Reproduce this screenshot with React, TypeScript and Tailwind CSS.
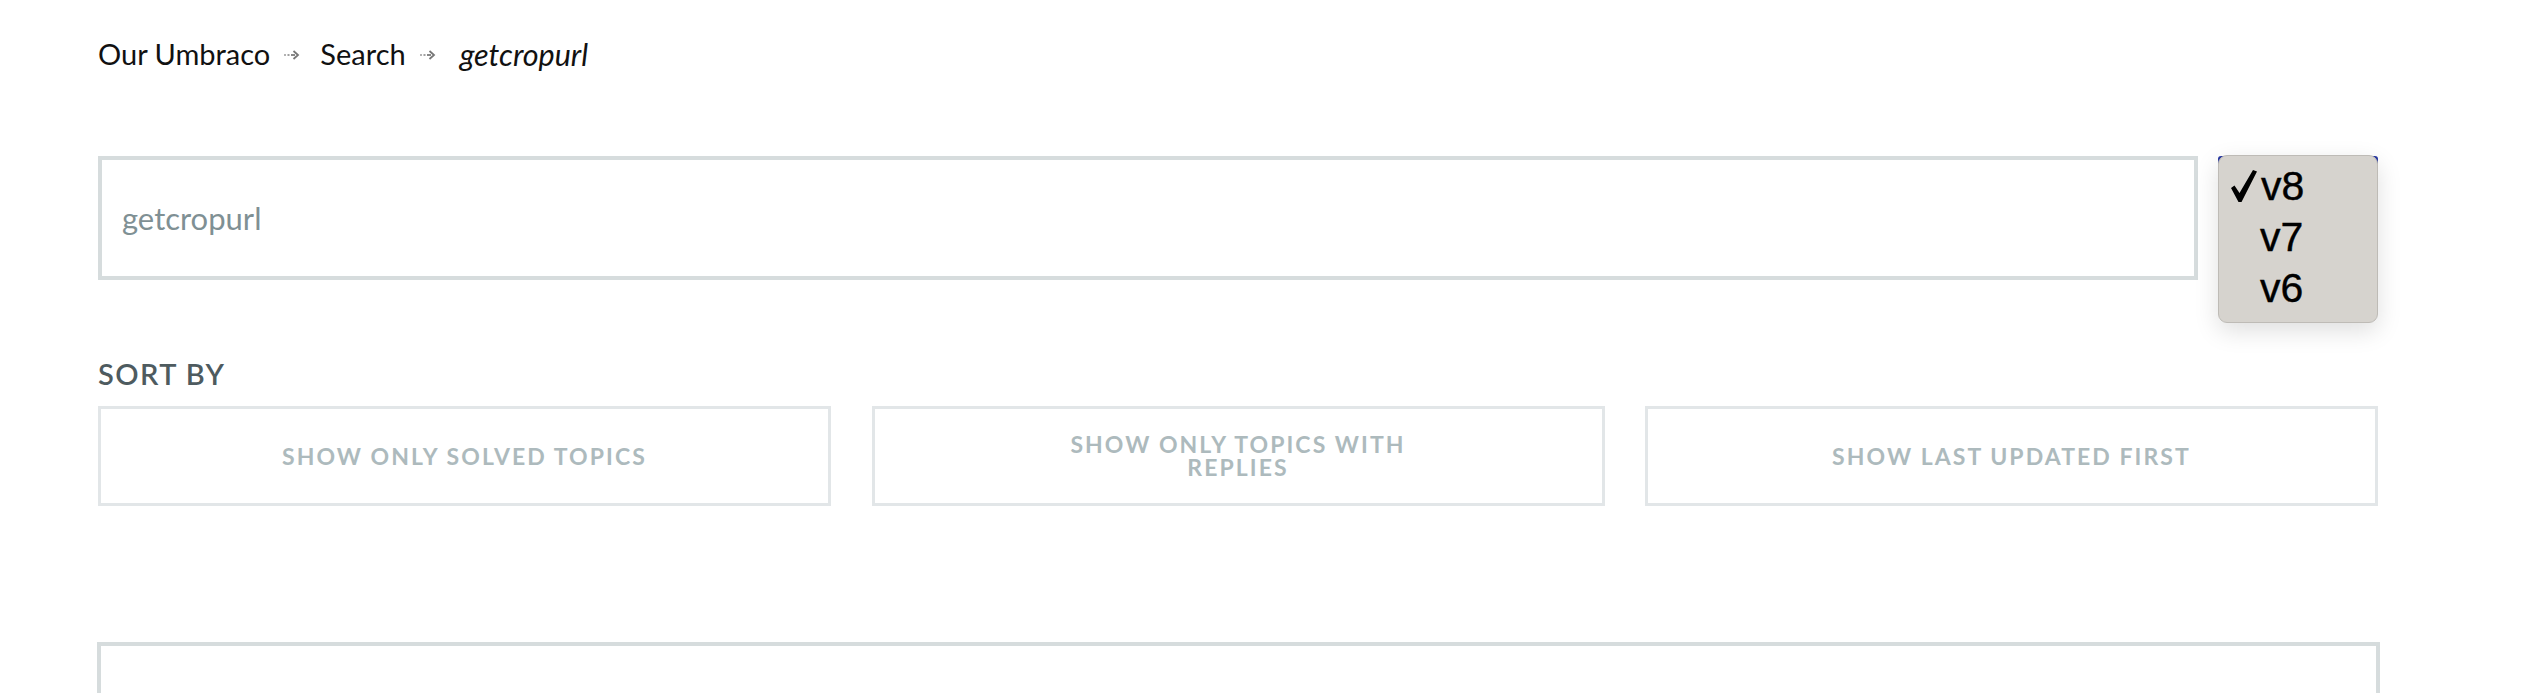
import React from "react";

function Arrow() {
  return (
    <svg width="16" height="10" viewBox="0 0 16 10" className="mx-[14px] mt-[2px] shrink-0">
      <rect x="0" y="4" width="2" height="2" fill="#b3b3b3" />
      <rect x="3.5" y="4" width="2" height="2" fill="#a0a0a0" />
      <rect x="7" y="4" width="4" height="2" fill="#888" />
      <path d="M9.5 1 L14 5 L9.5 9" fill="none" stroke="#777" strokeWidth="1.8" />
    </svg>
  );
}

function Check() {
  return (
    <svg width="26" height="32" viewBox="0 0 26 32" className="absolute left-[12px] top-[14px]">
      <path d="M0 18 L3.5 15.5 L8.5 23 L22 0 L26 1.5 L10.5 32 L7.5 32 Z" fill="#000" />
    </svg>
  );
}

function SortButton({ children }: { children: React.ReactNode }) {
  return (
    <div className="flex h-[100px] w-[733px] items-center justify-center border-[3px] border-[#e2e6e8] bg-white text-center text-[23px] font-bold uppercase leading-[23px] tracking-[0.09em] text-[#adbabd]">
      <span>{children}</span>
    </div>
  );
}

export default function App() {
  return (
    <div className="min-h-[693px] bg-white font-['Lato','Noto_Sans',sans-serif]">
      <div className="w-[2280px] ml-[98px]">
        {/* Breadcrumb */}
        <div className="flex items-center pt-[36px] text-[29px] leading-[36px] text-[#111]">
          <span>Our Umbraco</span>
          <Arrow />
          <span className="ml-[6px]">Search</span>
          <Arrow />
          <span className="ml-[10px] text-[30.5px] italic">getcropurl</span>
        </div>

        {/* Search row */}
        <div className="mt-[84px] flex gap-[20px]">
          <div className="flex h-[124px] w-[2100px] items-center border-4 border-[#d6dcdd] bg-white pl-[20px]">
            <span className="text-[31px] leading-[36px] text-[#7f9094]">getcropurl</span>
          </div>
          <div className="relative h-[124px] w-[160px]">
            <div className="absolute inset-0 rounded-[3px] bg-[#2a3aa3]" />
            <div className="absolute left-0 top-[-1px] h-[168px] w-[160px] rounded-[9px] border border-[#bebbb6] bg-[#d6d3ce] pt-[5px] shadow-[0_8px_24px_rgba(0,0,0,0.13)] font-['Liberation_Sans','Arial',sans-serif] text-[41px] leading-[51px] text-black [-webkit-text-stroke:0.4px_black]">
              <Check />
              <div className="pl-[42px]">v8</div>
              <div className="pl-[41px]">v7</div>
              <div className="pl-[41px]">v6</div>
            </div>
          </div>
        </div>

        {/* Sort by */}
        <div className="mt-[77px] text-[29px] font-semibold leading-[34px] tracking-[0.05em] text-[#4e5b5f]">
          SORT BY
        </div>
        <div className="mt-[15px] flex justify-between">
          <SortButton>Show only solved topics</SortButton>
          <SortButton>
            Show only topics with
            <br />
            replies
          </SortButton>
          <SortButton>Show last updated first</SortButton>
        </div>

        {/* Results box */}
        <div className="mt-[136px] h-[200px] w-[2283px] -ml-[1px] border-4 border-[#d6dcdd] bg-white" />
      </div>
    </div>
  );
}
